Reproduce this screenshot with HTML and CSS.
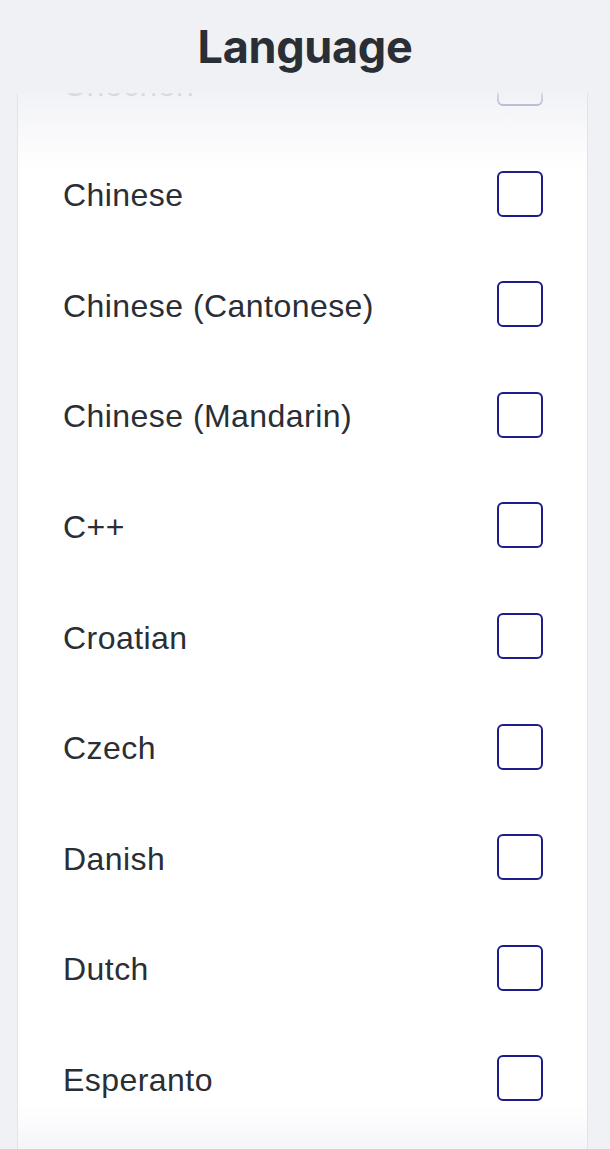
FILE: index.html
```html
<!DOCTYPE html>
<html lang="en">
<head>
<meta charset="utf-8">
<title>Language</title>
<link rel="stylesheet" href="styles.css">
</head>
<body>
<header class="header">
  <h1 class="title">Language</h1>
</header>
<main class="card">
  <ul class="list">
    <li class="row"><span class="label">Chechen</span><span class="box"></span></li>
    <li class="row"><span class="label">Chinese</span><span class="box"></span></li>
    <li class="row"><span class="label">Chinese (Cantonese)</span><span class="box"></span></li>
    <li class="row"><span class="label">Chinese (Mandarin)</span><span class="box"></span></li>
    <li class="row"><span class="label">C++</span><span class="box"></span></li>
    <li class="row"><span class="label">Croatian</span><span class="box"></span></li>
    <li class="row"><span class="label">Czech</span><span class="box"></span></li>
    <li class="row"><span class="label">Danish</span><span class="box"></span></li>
    <li class="row"><span class="label">Dutch</span><span class="box"></span></li>
    <li class="row"><span class="label">Esperanto</span><span class="box"></span></li>
  </ul>
</main>
</body>
</html>
```

FILE: styles.css
```css
html, body {
  margin: 0;
  padding: 0;
  height: 100%;
  overflow: hidden;
}
body {
  background: #f0f1f5;
  font-family: Inter, "Liberation Sans", sans-serif;
  color: #2a2e35;
}
.header {
  height: 93px;
  display: flex;
  justify-content: center;
  align-items: flex-start;
}
.title {
  margin: 19px 0 0 0;
  font-size: 45px;
  line-height: 56px;
  font-weight: 700;
  color: #2a2e35;
  letter-spacing: -0.3px;
}
.card {
  position: relative;
  margin-left: 17px;
  width: 569px;
  height: 1056px;
  background: #ffffff;
  border-left: 1px solid #e2e3e8;
  border-right: 1px solid #e2e3e8;
  overflow: hidden;
}
.card::before,
.card::after {
  content: "";
  position: absolute;
  left: 0;
  right: 0;
  pointer-events: none;
  z-index: 2;
}
.card::before {
  top: 0;
  height: 80px;
  background: linear-gradient(to bottom, rgba(240,241,245,0.9) 0%, rgba(240,241,245,0.5) 40%, rgba(255,255,255,0) 100%);
}
.card::after {
  bottom: 0;
  height: 44px;
  background: linear-gradient(to top, rgba(240,241,245,0.7) 0%, rgba(255,255,255,0) 100%);
}
.list {
  list-style: none;
  margin: -65px 0 0 0;
  padding: 0;
}
.row {
  height: 110.56px;
  display: flex;
  align-items: center;
  justify-content: space-between;
  padding: 0 44px 0 45px;
  box-sizing: border-box;
}
.label {
  font-family: "Liberation Sans", Arial, sans-serif;
  font-size: 32px;
  color: #2a2e35;
  letter-spacing: 0.45px;
  padding-top: 4px;
}
.box {
  width: 46px;
  height: 46px;
  box-sizing: border-box;
  border: 2px solid #1c1c8a;
  border-radius: 6px;
  flex-shrink: 0;
}
```
